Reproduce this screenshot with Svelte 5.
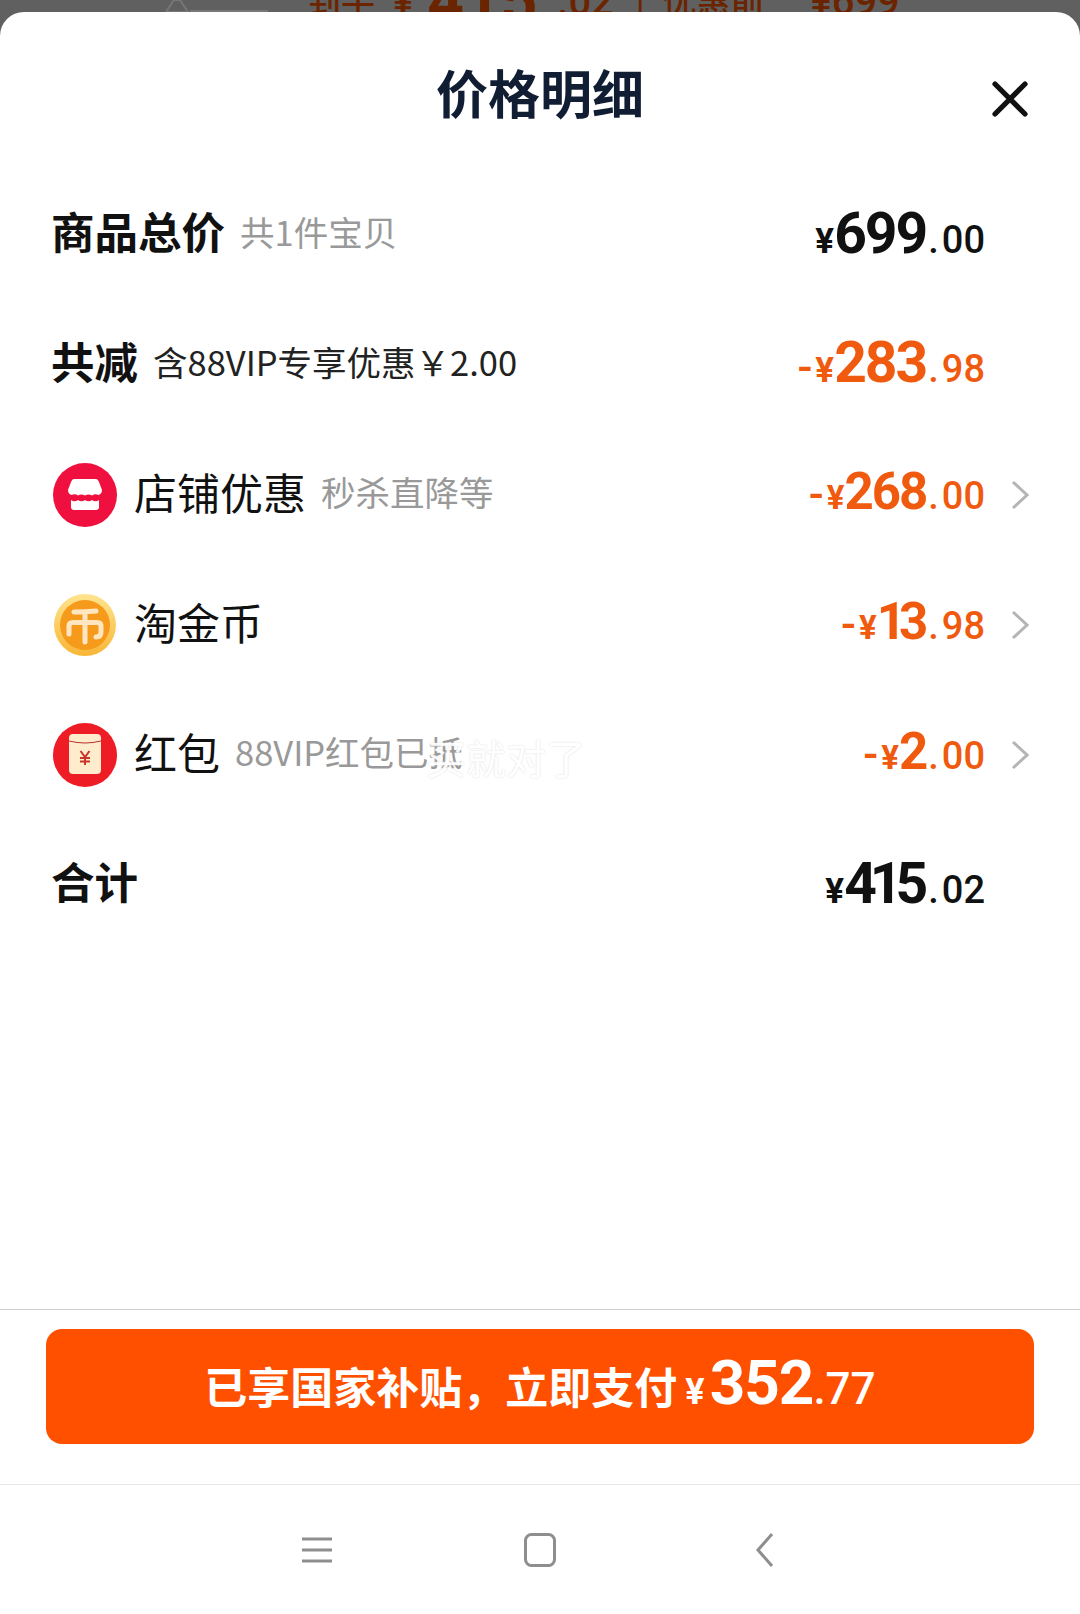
<script lang="ts">
  type Row = {
    label: string;
    note?: string;
    icon?: 'shop' | 'coin' | 'packet';
    strong?: boolean;
    noteDark?: boolean;
    sign?: string;
    int: string;
    dec: string;
    discount?: boolean;
    arrow?: boolean;
  };

  const rows: Row[] = [
    { label: '商品总价', note: '共1件宝贝', strong: true, int: '699', dec: '00' },
    { label: '共减', note: '含88VIP专享优惠￥2.00', strong: true, noteDark: true, sign: '-', int: '283', dec: '98', discount: true },
    { label: '店铺优惠', note: '秒杀直降等', icon: 'shop', sign: '-', int: '268', dec: '00', discount: true, arrow: true },
    { label: '淘金币', icon: 'coin', sign: '-', int: '13', dec: '98', discount: true, arrow: true },
    { label: '红包', note: '88VIP红包已抵', icon: 'packet', sign: '-', int: '2', dec: '00', discount: true, arrow: true },
    { label: '合计', strong: true, int: '415', dec: '02' },
  ];
</script>

<div class="page">
  <div class="behind">
    <svg class="behind-pic" viewBox="0 0 110 12" width="110" height="12">
      <path d="M6 12 L14 0 H20 L28 12 Z M30 11 H108" fill="none" stroke="#777" stroke-width="2" />
    </svg>
    <span class="hand">到手</span><span class="hand-yen">¥</span><b>415</b><span class="cents">.02</span><span class="bar">|</span><span class="before">优惠前</span><span class="before-num">¥699</span>
  </div>

  <div class="sheet">
    <header>
      <h1>价格明细</h1>
      <svg class="close" viewBox="0 0 36 36" width="36" height="36">
        <path d="M3 3 L33 33 M33 3 L3 33" stroke="#111" stroke-width="5.200" stroke-linecap="round" />
      </svg>
    </header>

    <div class="rows">
      {#each rows as row (row.label)}
        <div class="row">
          {#if row.icon === 'shop'}
            <svg class="icon" viewBox="0 0 64 64">
              <circle cx="32" cy="32" r="32" fill="#f0103f" />
              <path d="M21 16 H43 Q45 16 46 19 L49 27 Q49 31 45.500 32 Q42 30.500 39 32.500 Q35.500 30.500 32 32.500 Q28.500 30.500 25 32.500 Q22 30.500 18.500 32 Q15 31 15 27 L18 19 Q19 16 21 16 Z" fill="#fff" />
              <path d="M18 37 Q21.500 39.500 25 37 Q28.500 39.500 32 37 Q35.500 39.500 39 37 Q42.500 39.500 46 37 V44 Q46 47 43 47 H21 Q18 47 18 44 Z" fill="#fff" />
            </svg>
          {:else if row.icon === 'coin'}
            <svg class="icon" viewBox="0 0 64 64">
              <defs>
                <linearGradient id="rim" x1="0" y1="0" x2="0" y2="1">
                  <stop offset="0" stop-color="#ffe48e" />
                  <stop offset="1" stop-color="#f8b637" />
                </linearGradient>
              </defs>
              <circle cx="32" cy="32" r="31" fill="url(#rim)" />
              <circle cx="32" cy="32" r="25" fill="#f59a1a" />
              <path d="M21 19 Q32 19 43 18 M32 19 V49 M16 41 V33 Q16 29.500 20 29.500 H44 Q48 29.500 48 33 V39 Q48 44 43 44" fill="none" stroke="#ffe6c0" stroke-width="5" stroke-linecap="round" />
            </svg>
          {:else if row.icon === 'packet'}
            <svg class="icon" viewBox="0 0 64 64">
              <circle cx="32" cy="32" r="32" fill="#ee1c25" />
              <rect x="16" y="11" width="32" height="40" rx="4" fill="#ffeccd" />
              <path d="M16 18 Q32 22 48 18" fill="none" stroke="#b5302a" stroke-width="1" />
              <path d="M27.500 28 L32 34 L36.500 28 M27 35 H37 M27 38.500 H37 M32 34 V42" fill="none" stroke="#c8352b" stroke-width="2" />
            </svg>
          {/if}

          <span class="label" class:strong={row.strong}>{row.label}</span>
          {#if row.note}
            <span class="note" class:dark={row.noteDark}>{row.note}</span>
          {/if}

          <span class="amount" class:discount={row.discount} class:small={row.arrow}>
            {#if row.sign}<i class="sign">{row.sign}</i>{/if}<i class="yen">¥</i><i class="int" class:tight={row.int.includes('1')}>{row.int}</i><i class="dec"><em>.</em>{row.dec}</i>
          </span>

          <span class="arrow-slot">
            {#if row.arrow}
              <svg viewBox="0 0 18 30" width="18" height="30">
                <path d="M2 2 L16 15 L2 28" fill="none" stroke="#b5b5b5" stroke-width="3" />
              </svg>
            {/if}
          </span>
        </div>
      {/each}
    </div>

    <span class="watermark">买就对了</span>

    <footer>
      <button>
        已享国家补贴，立即支付<i class="pay-yen">¥</i><i class="pay-int">352</i><i class="pay-dec">.77</i>
      </button>
    </footer>

    <nav>
      <svg viewBox="0 0 32 28" width="32" height="28">
        <path d="M1 3 H31 M1 14 H31 M1 25 H31" stroke="#8e8e8e" stroke-width="3" />
      </svg>
      <svg viewBox="0 0 32 34" width="32" height="34">
        <rect x="1.500" y="1.500" width="29" height="31" rx="6" fill="none" stroke="#8e8e8e" stroke-width="3" />
      </svg>
      <svg viewBox="0 0 20 34" width="20" height="34">
        <path d="M17 1 L3 17 L17 33" fill="none" stroke="#8e8e8e" stroke-width="3" />
      </svg>
    </nav>
  </div>
</div>

<style>
  :global(body) {
    margin: 0;
    background: #fff;
  }

  .page {
    width: 1080px;
    height: 1614px;
    display: flex;
    flex-direction: column;
    background: #606060;
    font-family: "Noto Sans CJK SC", "Liberation Sans", sans-serif;
    overflow: hidden;
  }

  i,
  em {
    font-style: normal;
  }

  /* page under the sheet, only its last pixels stick out */
  .behind {
    height: 12px;
    flex: none;
    overflow: hidden;
    display: flex;
    align-items: flex-end;
    padding-left: 160px;
    color: #6b2400;
    font-family: Roboto, "Noto Sans CJK SC", sans-serif;
    font-weight: 500;
    font-size: 34px;
    line-height: 20px;
    white-space: nowrap;
  }

  .behind-pic {
    flex: none;
    margin-right: 37px;
  }

  .hand-yen {
    margin-left: 18px;
    font-size: 38px;
  }

  .behind b {
    margin-left: 14px;
    font-size: 64px;
    font-weight: 700;
  }

  .cents {
    margin-left: 20px;
    font-size: 40px;
  }

  .bar {
    margin-left: 22px;
  }

  .before {
    margin-left: 18px;
  }

  .before-num {
    margin-left: 46px;
    font-size: 40px;
  }

  .sheet {
    position: relative;
    flex: 1;
    display: flex;
    flex-direction: column;
    background: #fff;
    border-radius: 24px 24px 0 0;
  }

  header {
    position: relative;
    height: 158px;
    flex: none;
    box-sizing: border-box;
    padding-top: 44px;
    text-align: center;
  }

  h1 {
    margin: 0;
    font-size: 52px;
    line-height: 72px;
    font-weight: 700;
    color: #111d33;
  }

  .close {
    position: absolute;
    right: 52px;
    top: 69px;
  }

  .rows {
    flex: 1;
    padding-left: 53px;
  }

  .row {
    height: 130px;
    display: flex;
    align-items: center;
  }

  .icon {
    width: 64px;
    height: 64px;
    flex: none;
    margin-right: 17px;
  }

  .label {
    font-size: 43px;
    color: #111;
    margin-bottom: 9px;
  }

  .label.strong {
    font-weight: 700;
    font-size: 43.500px;
    margin-left: -2px;
  }

  .note {
    margin-left: 15px;
    margin-bottom: 9px;
    font-size: 34.500px;
    color: #999;
  }

  .note.dark {
    color: #222;
  }

  .amount {
    margin-left: auto;
    margin-bottom: 4px;
    display: flex;
    align-items: baseline;
    color: #111;
    font-family: Roboto, "Liberation Sans", sans-serif;
    font-weight: 700;
    white-space: nowrap;
  }

  .amount.discount {
    color: #f05a0f;
  }

  .sign {
    font-size: 44px;
    font-weight: 500;
    margin-right: 3px;
  }

  .yen {
    font-size: 35px;
  }

  .int {
    font-size: 57px;
    line-height: 1;
    letter-spacing: -2px;
    margin-right: 2px;
  }

  .int.tight {
    letter-spacing: -7px;
    margin-right: 7px;
  }

  .small .int {
    font-size: 51px;
  }

  .small .yen {
    font-size: 33px;
  }

  .dec {
    font-size: 38px;
    font-weight: 500;
  }

  .dec em {
    margin-right: 3px;
  }

  .arrow-slot {
    width: 95px;
    flex: none;
    display: flex;
    align-items: center;
    padding-left: 26px;
    box-sizing: border-box;
  }

  .watermark {
    position: absolute;
    left: 426px;
    top: 720px;
    font-size: 40px;
    line-height: 50px;
    color: #fff;
    opacity: 0.92;
    text-shadow: 0 0 2px #d8d8d8;
  }

  footer {
    height: 176px;
    flex: none;
    box-sizing: border-box;
    padding: 19px 46px 0;
    border-top: 1px solid #cfcfcf;
    border-bottom: 1px solid #e6e6e6;
  }

  button {
    width: 100%;
    height: 115px;
    border: none;
    border-radius: 16px;
    background: #ff5000;
    color: #fff;
    font-family: "Noto Sans CJK SC", "Liberation Sans", sans-serif;
    font-size: 43px;
    font-weight: 700;
    display: flex;
    justify-content: center;
    align-items: baseline;
    padding: 23px 0 0;
    white-space: nowrap;
  }

  .pay-yen,
  .pay-int,
  .pay-dec {
    font-family: Roboto, "Liberation Sans", sans-serif;
  }

  .pay-yen {
    font-size: 36px;
    margin-left: 8px;
  }

  .pay-int {
    font-size: 62px;
    line-height: 1;
    margin-left: 5px;
    letter-spacing: -1px;
  }

  .pay-dec {
    font-size: 44px;
    font-weight: 500;
  }

  nav {
    height: 129px;
    flex: none;
    display: flex;
    align-items: center;
    padding-left: 301px;
  }

  nav svg:nth-child(2) {
    margin-left: 191px;
  }

  nav svg:nth-child(3) {
    margin-left: 199px;
  }
</style>
